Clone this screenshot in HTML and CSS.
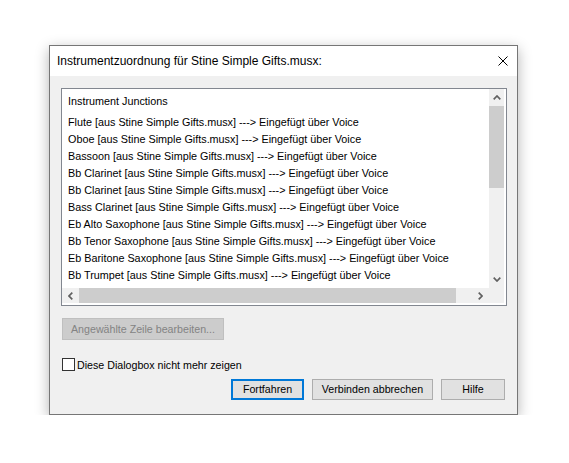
FILE: index.html
```html
<!DOCTYPE html>
<html>
<head>
<meta charset="utf-8">
<link rel="stylesheet" href="styles.css">
</head>
<body>
<div class="dialog">
  <div class="titlebar">
    <span class="title">Instrumentzuordnung für Stine Simple Gifts.musx:</span>
    <svg class="close" width="10" height="10" viewBox="0 0 10 10"><path d="M0.5 0.5 L9.5 9.5 M9.5 0.5 L0.5 9.5" stroke="#000" stroke-width="1" fill="none"/></svg>
  </div>
  <div class="body">
    <div class="listbox">
      <div class="list">
        <div class="row head">Instrument Junctions</div>
        <div class="row">Flute [aus Stine Simple Gifts.musx] ---&gt; Eingefügt über Voice</div>
        <div class="row">Oboe [aus Stine Simple Gifts.musx] ---&gt; Eingefügt über Voice</div>
        <div class="row">Bassoon [aus Stine Simple Gifts.musx] ---&gt; Eingefügt über Voice</div>
        <div class="row">Bb Clarinet [aus Stine Simple Gifts.musx] ---&gt; Eingefügt über Voice</div>
        <div class="row">Bb Clarinet [aus Stine Simple Gifts.musx] ---&gt; Eingefügt über Voice</div>
        <div class="row">Bass Clarinet [aus Stine Simple Gifts.musx] ---&gt; Eingefügt über Voice</div>
        <div class="row">Eb Alto Saxophone [aus Stine Simple Gifts.musx] ---&gt; Eingefügt über Voice</div>
        <div class="row">Bb Tenor Saxophone [aus Stine Simple Gifts.musx] ---&gt; Eingefügt über Voice</div>
        <div class="row">Eb Baritone Saxophone [aus Stine Simple Gifts.musx] ---&gt; Eingefügt über Voice</div>
        <div class="row">Bb Trumpet [aus Stine Simple Gifts.musx] ---&gt; Eingefügt über Voice</div>
      </div>
      <div class="vscroll">
        <div class="sbtn-v"><svg width="8" height="5" viewBox="0 0 8 5"><path d="M0.7 4.3 L4 1 L7.3 4.3" stroke="#606060" stroke-width="1.7" fill="none"/></svg></div>
        <div class="vthumb"></div>
        <div class="vtrack"></div>
        <div class="sbtn-v"><svg width="8" height="5" viewBox="0 0 8 5"><path d="M0.7 0.7 L4 4 L7.3 0.7" stroke="#606060" stroke-width="1.7" fill="none"/></svg></div>
      </div>
      <div class="hscroll">
        <div class="sbtn-h"><svg width="5" height="8" viewBox="0 0 5 8"><path d="M4.3 0.7 L1 4 L4.3 7.3" stroke="#606060" stroke-width="1.7" fill="none"/></svg></div>
        <div class="hthumb"></div>
        <div class="htrack"></div>
        <div class="sbtn-h"><svg width="5" height="8" viewBox="0 0 5 8"><path d="M0.7 0.7 L4 4 L0.7 7.3" stroke="#606060" stroke-width="1.7" fill="none"/></svg></div>
      </div>
      <div class="corner"></div>
    </div>
    <button class="btn edit" disabled>Angewählte Zeile bearbeiten...</button>
    <label class="check"><span class="box"></span><span class="check-label">Diese Dialogbox nicht mehr zeigen</span></label>
    <div class="actions">
      <button class="btn default fort">Fortfahren</button>
      <button class="btn verb">Verbinden abbrechen</button>
      <button class="btn hilfe">Hilfe</button>
    </div>
  </div>
</div>
</body>
</html>
```
FILE: styles.css
```css
* { box-sizing: border-box; }
body {
  margin: 0;
  background: #ffffff;
  font-family: "Segoe UI", "Liberation Sans", Arial, sans-serif;
  color: #000;
}
.dialog {
  margin: 45px 0 0 49px;
  width: 469px;
  height: 370px;
  border: 1px solid #767676;
  background: #f0f0f0;
  box-shadow: 0 4px 13px rgba(0, 0, 0, 0.3);
  display: flex;
  flex-direction: column;
}
.titlebar {
  flex: none;
  height: 30px;
  background: #ffffff;
  display: flex;
  align-items: center;
  justify-content: space-between;
  padding: 0 9px 0 7px;
}
.title { font-size: 12px; }
.close { display: block; }
.body {
  flex: 1;
  padding: 12px 10px 0 11px;
  display: flex;
  flex-direction: column;
  align-items: flex-start;
  font-size: 10.67px;
}
.listbox {
  width: 446px;
  height: 218px;
  border: 1px solid #828790;
  background: #ffffff;
  padding: 0 2px 2px 0;
  display: grid;
  grid-template-columns: 427px 15px;
  grid-template-rows: 199px 15px;
}
.list {
  overflow: hidden;
  padding: 4px 0 0 6px;
  font-size: 10.8px;
}
.row {
  height: 17px;
  line-height: 17px;
  white-space: nowrap;
}
.head { margin-bottom: 4px; }
.vscroll {
  background: #f0f0f0;
  display: flex;
  flex-direction: column;
}
.sbtn-v {
  flex: none;
  height: 17px;
  display: flex;
  align-items: center;
  justify-content: center;
}
.sbtn-v svg, .sbtn-h svg { display: block; }
.vthumb { flex: none; height: 82px; background: #cdcdcd; }
.vtrack { flex: 1; }
.hscroll {
  background: #f0f0f0;
  display: flex;
}
.sbtn-h {
  flex: none;
  width: 17px;
  display: flex;
  align-items: center;
  justify-content: center;
}
.hthumb { flex: none; width: 377px; background: #cdcdcd; }
.htrack { flex: 1; }
.corner { background: #f0f0f0; }
.btn {
  font-family: inherit;
  font-size: 10.67px;
  color: #000;
  background: #e1e1e1;
  border: 1px solid #adadad;
  padding: 0;
  margin: 0;
  height: 21px;
  line-height: 1;
}
.edit {
  margin-top: 12px;
  margin-left: 1px;
  width: 162px;
  height: 22px;
  background: #cccccc;
  border-color: #bfbfbf;
  color: #838383;
}
.check {
  margin-top: 18px;
  margin-left: 1px;
  height: 13px;
  display: flex;
  align-items: center;
}
.box {
  width: 13px;
  height: 13px;
  border: 1px solid #333333;
  background: #ffffff;
}
.check-label { margin-left: 2px; }
.actions {
  margin-top: 8px;
  align-self: stretch;
  display: flex;
  justify-content: flex-end;
  gap: 8px;
  padding-right: 2px;
}
.default { border: 2px solid #0078d7; }
.fort { width: 73px; }
.verb { width: 121px; }
.hilfe { width: 64px; }
```
